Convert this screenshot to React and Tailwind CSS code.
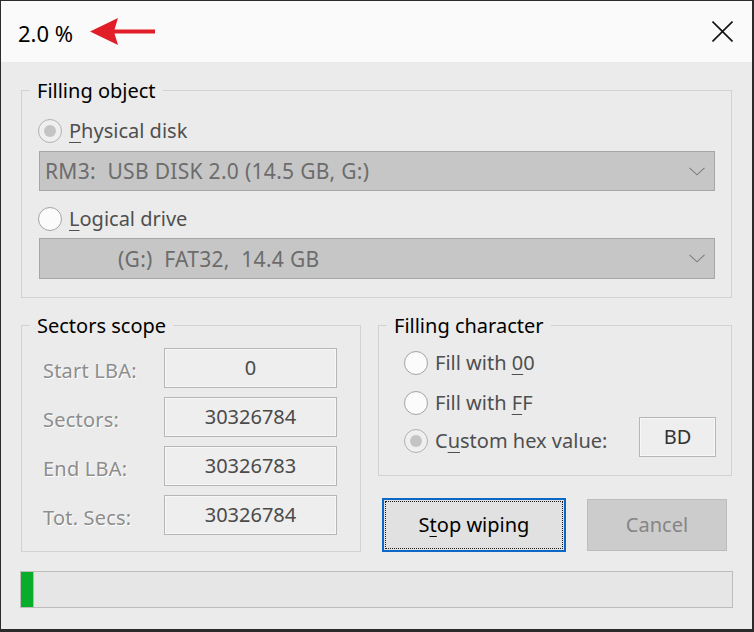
import React from "react";

function RadioCircle({ checked }) {
  return checked ? (
    <span className="flex h-[24px] w-[24px] shrink-0 items-center justify-center rounded-full border border-[#b1b1b1] bg-[#efefef]">
      <span className="h-[12px] w-[12px] rounded-full bg-[#c4c4c4]" />
    </span>
  ) : (
    <span className="h-[24px] w-[24px] shrink-0 rounded-full border border-[#a3a3a3] bg-[#fbfbfb]" />
  );
}

function Radio({ checked, children, className = "" }) {
  return (
    <div className={"flex h-[26px] items-center gap-[7px] text-[20px] leading-[26px] text-[#4f4f4f] " + className}>
      <RadioCircle checked={checked} />
      <span>{children}</span>
    </div>
  );
}

function U({ children }) {
  return <span className="underline decoration-1 underline-offset-[4px]">{children}</span>;
}

function Chevron() {
  return (
    <svg width="16" height="9" viewBox="0 0 16 9" className="shrink-0">
      <polyline points="0.5,0.8 8,7.8 15.5,0.8" fill="none" stroke="#7d7d7d" strokeWidth="1.1" />
    </svg>
  );
}

function Combo({ children, className = "", textPad = "pl-[5px]" }) {
  return (
    <div className={"ml-px flex items-center justify-between border border-[#a6a6a6] bg-[#c6c6c6] pr-[9px] " + textPad + " " + className}>
      <span className="text-[21px] leading-[26px] tracking-[0.3px] text-[#6c6c6c] whitespace-pre">{children}</span>
      <Chevron />
    </div>
  );
}

function ValueBox({ children }) {
  return (
    <div className="flex h-[40px] w-[173px] items-center justify-center border border-[#b6b6b6] bg-[#eeeeee] text-[20px] text-[#4a4a4a] shadow-[inset_0_0_0_1px_#f7f7f7]">
      {children}
    </div>
  );
}

function SecLabel({ children }) {
  return (
    <div className="flex h-[40px] items-center pt-[5px] text-[20px] tracking-[0.2px] text-[#8d8d8d] [text-shadow:1px_1px_0_#ffffff]">
      {children}
    </div>
  );
}

function Legend({ children }) {
  return (
    <legend className="ml-[8px] px-[7px] pt-[2px] text-[20px] leading-[26px] text-black">{children}</legend>
  );
}

export default function App() {
  return (
    <div className="flex h-[632px] w-[754px] flex-col border-t border-l border-r-2 border-b-[3px] border-[#2b2b2b] font-['Noto_Sans',sans-serif]">
      {/* Title bar */}
      <div className="flex h-[61px] shrink-0 items-center bg-[#fafafa] pl-[17px] pr-[19px]">
        <span className="pt-[2px] text-[22px] leading-[28px] text-black">2.0 %</span>
        <svg width="66" height="28" viewBox="0 0 66 28" className="ml-[17px]">
          <path d="M0,13.5 L28,0 L24.5,11.5 L65,11.5 L65,15.5 L24.5,15.5 L28,27 Z" fill="#e11d27" />
        </svg>
        <div className="flex-1" />
        <svg width="21" height="21" viewBox="0 0 21 21">
          <line x1="0.5" y1="0.5" x2="20.5" y2="20.5" stroke="#111" strokeWidth="1.6" />
          <line x1="20.5" y1="0.5" x2="0.5" y2="20.5" stroke="#111" strokeWidth="1.6" />
        </svg>
      </div>

      {/* Content */}
      <div className="flex flex-1 flex-col bg-[#ebebeb] px-[20px] pt-[14px]">
        <fieldset className="border border-[#d2d2d2]">
          <Legend>Filling object</Legend>
          <div className="flex flex-col pl-[16px] pr-[16px] pb-[18px]">
            <Radio checked className="mt-[14px]">
              <U>P</U>hysical disk
            </Radio>
            <Combo className="mt-[7px] h-[40px]">{"RM3:  USB DISK 2.0 (14.5 GB, G:)"}</Combo>
            <Radio className="mt-[15px]">
              <U>L</U>ogical drive
            </Radio>
            <Combo className="mt-[6px] h-[41px]" textPad="pl-[78px]">{"(G:)  FAT32,  14.4 GB"}</Combo>
          </div>
        </fieldset>

        <div className="mt-[13px] flex gap-[17px]">
          <fieldset className="w-[340px] shrink-0 border border-[#d2d2d2]">
            <Legend>Sectors scope</Legend>
            <div className="grid grid-cols-[121px_173px] gap-y-[9px] pl-[21px] pt-[9px] pb-[15px]">
              <SecLabel>Start LBA:</SecLabel>
              <ValueBox>0</ValueBox>
              <SecLabel>Sectors:</SecLabel>
              <ValueBox>30326784</ValueBox>
              <SecLabel>End LBA:</SecLabel>
              <ValueBox>30326783</ValueBox>
              <SecLabel>Tot. Secs:</SecLabel>
              <ValueBox>30326784</ValueBox>
            </div>
          </fieldset>

          <div className="flex w-[354px] shrink-0 flex-col">
            <fieldset className="border border-[#d2d2d2]">
              <Legend>Filling character</Legend>
              <div className="flex flex-col pl-[25px] pr-[15px] pt-[11px] pb-[18px]">
                <Radio>
                  Fill with <U>0</U>0
                </Radio>
                <Radio className="mt-[14px]">
                  Fill with <U>F</U>F
                </Radio>
                <div className="mt-px flex items-start justify-between">
                  <Radio checked className="mt-[11px]">
                    C<U>u</U>stom hex value:
                  </Radio>
                  <div className="flex h-[40px] w-[77px] items-center justify-center border border-[#b6b6b6] bg-[#eeeeee] text-[20px] text-[#333333] shadow-[inset_0_0_0_1px_#f7f7f7]">
                    BD
                  </div>
                </div>
              </div>
            </fieldset>

            <div className="mt-[22px] flex items-center gap-[21px] pl-[4px]">
              <button className="flex h-[54px] w-[184px] items-center justify-center border-2 border-[#0c68c6] bg-[#e1e1e1] text-[20px] text-black outline-1 outline-dotted outline-[#1a1a1a] -outline-offset-[4px]">
                <span>
                  S<U>t</U>op wiping
                </span>
              </button>
              <button className="flex h-[52px] w-[140px] items-center justify-center border border-[#bcbcbc] bg-[#cccccc] text-[20px] text-[#858585]">
                Cancel
              </button>
            </div>
          </div>
        </div>

        <div className="-mx-px mt-[19px] flex h-[37px] border border-[#bcbcbc] bg-[#e6e6e6]">
          <div className="h-full w-[13px] border-r border-[#7fdd86] bg-[#08ad2a]" />
        </div>
      </div>
    </div>
  );
}
